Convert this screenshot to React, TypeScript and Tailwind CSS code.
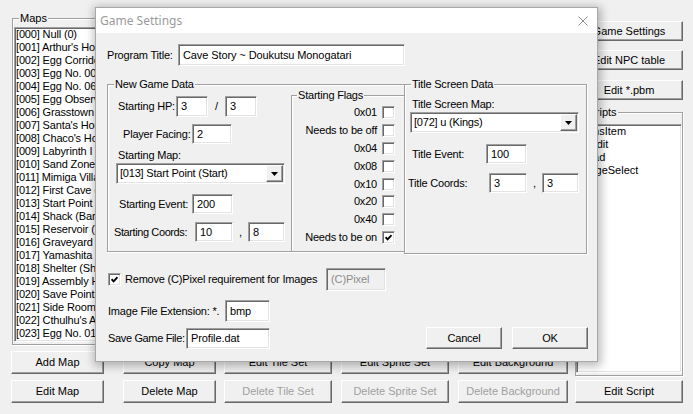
import React from "react";

const raised =
  "bg-[#f0f0f0] border border-t-white border-l-white border-b-[#696969] border-r-[#696969] shadow-[inset_-1px_-1px_0_#a0a0a0]";
const sunken =
  "border border-t-[#a0a0a0] border-l-[#a0a0a0] border-b-white border-r-white shadow-[inset_1px_1px_0_#696969,inset_-1px_-1px_0_#e3e3e3]";

function Btn({ label, className = "", disabled = false }: { label: string; className?: string; disabled?: boolean }) {
  return (
    <div
      className={`${raised} flex items-center justify-center whitespace-nowrap shrink-0 ${
        disabled ? "text-[#a0a0a0]" : "text-black"
      } ${className}`}
    >
      {label}
    </div>
  );
}

function Field({ value, className = "", disabled = false }: { value: string; className?: string; disabled?: boolean }) {
  return (
    <div
      className={`${sunken} ${
        disabled ? "bg-[#f0f0f0] text-[#8c8c8c]" : "bg-white"
      } flex items-center pl-[4px] whitespace-nowrap overflow-hidden shrink-0 tracking-[-0.1px] ${className}`}
    >
      {value}
    </div>
  );
}

function Combo({ value, className = "" }: { value: string; className?: string }) {
  return (
    <div className={`${sunken} bg-white flex items-stretch shrink-0 p-[1px] ${className}`}>
      <div className="flex-1 flex items-center pl-[2px] whitespace-nowrap overflow-hidden">{value}</div>
      <div className={`${raised} w-[17px] flex items-center justify-center`}>
        <svg width="7" height="4" viewBox="0 0 7 4">
          <path d="M0 0H7L3.5 4Z" fill="#000" />
        </svg>
      </div>
    </div>
  );
}

function Check({ checked = false }: { checked?: boolean }) {
  return (
    <div className={`${sunken} bg-white w-[13px] h-[13px] shrink-0 flex items-center justify-center`}>
      {checked && (
        <svg width="7" height="7" viewBox="0 0 7 7">
          <path d="M0.6 3.2 L2.6 5.3 L6.5 1.2" stroke="#000" strokeWidth="1.9" fill="none" />
        </svg>
      )}
    </div>
  );
}

function Group({
  label,
  className = "",
  labelClass = "left-[6px]",
  children,
}: {
  label: string;
  className?: string;
  labelClass?: string;
  children?: React.ReactNode;
}) {
  return (
    <div className={`relative border border-[#a0a0a0] shadow-[inset_1px_1px_0_#fff,1px_1px_0_#fff] ${className}`}>
      <span className={`absolute -top-[7px] ${labelClass} bg-[#f0f0f0] px-[1px] leading-[13px] whitespace-nowrap`}>
        {label}
      </span>
      {children}
    </div>
  );
}

const MAPS = [
  "[000] Null (0)",
  "[001] Arthur's House (Pens1)",
  "[002] Egg Corridor (Eggs)",
  "[003] Egg No. 00 (EggX)",
  "[004] Egg No. 06 (Egg6)",
  "[005] Egg Observation Room (EggR)",
  "[006] Grasstown (Weed)",
  "[007] Santa's House (Santa)",
  "[008] Chaco's House (Chako)",
  "[009] Labyrinth I (MazeI)",
  "[010] Sand Zone (Sand)",
  "[011] Mimiga Village (Mimi)",
  "[012] First Cave (Cave)",
  "[013] Start Point (Start)",
  "[014] Shack (Barr)",
  "[015] Reservoir (Pool)",
  "[016] Graveyard (Cemet)",
  "[017] Yamashita Farm (Plant)",
  "[018] Shelter (Shelt)",
  "[019] Assembly Hall (Comu)",
  "[020] Save Point (MiBox)",
  "[021] Side Room (EgEnd1)",
  "[022] Cthulhu's Abode (Cthu)",
  "[023] Egg No. 01 (Egg1)",
];

const SCRIPTS = ["ArmsItem", "Credit", "Head", "StageSelect"];

const FLAGS: [string, boolean][] = [
  ["0x01", false],
  ["Needs to be off", false],
  ["0x04", false],
  ["0x08", false],
  ["0x10", false],
  ["0x20", false],
  ["0x40", false],
  ["Needs to be on", true],
];

function Dialog() {
  return (
    <div className="absolute left-[95px] top-[7px] w-[503px] h-[355px] border border-[#a8a8a8] bg-[#f0f0f0] shadow-[1px_2px_9px_2px_rgba(0,0,0,0.28)] flex flex-col tracking-[-0.2px]">
      {/* title bar */}
      <div className="h-[25px] bg-white flex items-center justify-between pl-[4px] pr-[9px] shrink-0 tracking-normal">
        <span className="font-['Noto_Sans',sans-serif] text-[12px] leading-[16px] text-[#9b9b9b]">Game Settings</span>
        <svg width="10" height="10" viewBox="0 0 10 10">
          <path d="M0.5 0.5 L9.5 9.5 M9.5 0.5 L0.5 9.5" stroke="#8f8f8f" strokeWidth="1" />
        </svg>
      </div>

      {/* program title */}
      <div className="mt-[11px] pl-[11px] flex items-center">
        <span className="w-[70px] mr-[1px] shrink-0 whitespace-nowrap">Program Title:</span>
        <Field value="Cave Story ~ Doukutsu Monogatari" className="w-[227px] h-[22px]" />
      </div>

      {/* groups */}
      <div className="mt-[18px] pl-[11px] flex items-start">
        <Group label="New Game Data" className="w-[298px] h-[168px] flex">
          <div className="w-[183px] shrink-0 flex flex-col">
            <div className="mt-[11px] pl-[10px] flex items-center h-[21px]">
              <span className="w-[57px] mr-[1px] shrink-0 whitespace-nowrap">Starting HP:</span>
              <Field value="3" className="w-[32px] h-[21px]" />
              <span className="w-[17px] text-center shrink-0">/</span>
              <Field value="3" className="w-[32px] h-[21px]" />
            </div>
            <div className="mt-[7px] pl-[15px] flex items-center h-[20px]">
              <span className="w-[68px] mr-[1px] shrink-0 whitespace-nowrap">Player Facing:</span>
              <Field value="2" className="w-[40px] h-[20px]" />
            </div>
            <div className="mt-[5px] pl-[10px] h-[13px] whitespace-nowrap">Starting Map:</div>
            <div className="mt-[1px] pl-[8px]">
              <Combo value="[013] Start Point (Start)" className="w-[169px] h-[21px]" />
            </div>
            <div className="mt-[10px] pl-[11px] flex items-center h-[20px]">
              <span className="w-[72px] mr-[1px] shrink-0 whitespace-nowrap">Starting Event:</span>
              <Field value="200" className="w-[41px] h-[20px]" />
            </div>
            <div className="mt-[8px] pl-[6px] flex items-center h-[20px]">
              <span className="w-[80px] mr-[1px] shrink-0 whitespace-nowrap tracking-[-0.4px]">Starting Coords:</span>
              <Field value="10" className="w-[38px] h-[20px]" />
              <span className="w-[15px] text-center shrink-0">,</span>
              <Field value="8" className="w-[37px] h-[20px]" />
            </div>
          </div>
          <Group
            label="Starting Flags"
            labelClass="left-[5px]"
            className="w-[114px] mt-[10px] -mr-[1px] -mb-[1px] self-stretch flex flex-col pt-[8px]"
          >
            {FLAGS.map(([t, c]) => (
              <div key={t} className="h-[17.8px] flex items-center justify-end pr-[9px] gap-[5px] whitespace-nowrap">
                <span>{t}</span>
                <Check checked={c} />
              </div>
            ))}
          </Group>
        </Group>

        <Group label="Title Screen Data" className="-ml-[1px] w-[183px] h-[170px] flex flex-col">
          <div className="mt-[13px] pl-[7px] h-[13px] whitespace-nowrap">Title Screen Map:</div>
          <div className="mt-[1px] pl-[5px]">
            <Combo value="[072] u (Kings)" className="w-[169px] h-[21px]" />
          </div>
          <div className="mt-[11px] pl-[7px] flex items-center h-[20px]">
            <span className="w-[73px] mr-[1px] shrink-0 whitespace-nowrap">Title Event:</span>
            <Field value="100" className="w-[41px] h-[20px]" />
          </div>
          <div className="mt-[9px] pl-[3px] flex items-center h-[20px]">
            <span className="w-[80px] mr-[1px] shrink-0 whitespace-nowrap">Title Coords:</span>
            <Field value="3" className="w-[38px] h-[20px]" />
            <span className="w-[15px] text-center shrink-0">,</span>
            <Field value="3" className="w-[37px] h-[20px]" />
          </div>
        </Group>
      </div>

      {/* remove pixel */}
      <div className="mt-[14px] pl-[12px] flex items-center h-[23px]">
        <Check checked />
        <span className="ml-[4px] w-[200px] mr-[1px] shrink-0 whitespace-nowrap">Remove (C)Pixel requirement for Images</span>
        <Field value="(C)Pixel" disabled className="w-[60px] h-[23px]" />
      </div>

      <div className="mt-[9px] pl-[12px] flex items-center h-[22px]">
        <span className="w-[116px] mr-[1px] shrink-0 whitespace-nowrap">Image File Extension: *.</span>
        <Field value="bmp" className="w-[45px] h-[22px]" />
      </div>

      <div className="mt-[5px] pl-[12px] pr-[9px] flex items-start">
        <div className="mt-[1px] flex items-center h-[21px]">
          <span className="w-[77px] mr-[1px] shrink-0 whitespace-nowrap tracking-[-0.35px]">Save Game File:</span>
          <Field value="Profile.dat" className="w-[84px] h-[21px]" />
        </div>
        <div className="ml-auto flex">
          <Btn label="Cancel" className="w-[76px] h-[22px]" />
          <Btn label="OK" className="ml-[10px] w-[76px] h-[22px]" />
        </div>
      </div>
    </div>
  );
}

export default function App() {
  return (
    <div className="relative w-[693px] h-[414px] overflow-hidden bg-[#f0f0f0] text-black text-[11px] leading-[13px] font-['Liberation_Sans',Arial,sans-serif]">
      <div className="flex pl-[11px] gap-[7px]">
        {/* left column */}
        <div className="flex flex-col w-[557px] shrink-0">
          <Group label="Maps" className="ml-[1px] mt-[18px] w-[556px] h-[327px]">
            <div className={`${sunken} bg-white mt-[8px] mx-[1px] h-[315px] overflow-hidden tracking-[-0.15px]`}>
              {MAPS.map((m) => (
                <div key={m} className="h-[13px] whitespace-nowrap pl-[1px]">
                  {m}
                </div>
              ))}
            </div>
          </Group>
          <div className="flex mt-[6px] h-[23px]">
            <Btn label="Add Map" className="w-[93px]" />
            <Btn label="Copy Map" className="ml-[19px] w-[93px]" />
            <Btn label="Edit Tile Set" className="ml-[8px] w-[108px]" />
            <Btn label="Edit Sprite Set" className="ml-[9px] w-[108px]" />
            <Btn label="Edit Background" className="ml-[9px] w-[110px]" />
          </div>
          <div className="flex mt-[6px] h-[23px]">
            <Btn label="Edit Map" className="w-[93px]" />
            <Btn label="Delete Map" className="ml-[19px] w-[93px]" />
            <Btn label="Delete Tile Set" disabled className="ml-[8px] w-[108px]" />
            <Btn label="Delete Sprite Set" disabled className="ml-[9px] w-[108px]" />
            <Btn label="Delete Background" disabled className="ml-[9px] w-[110px]" />
          </div>
        </div>

        {/* right column */}
        <div className="flex flex-col w-[108px] shrink-0">
          <Btn label="Game Settings" className="mt-[21px] h-[20px]" />
          <Btn label="Edit NPC table" className="mt-[9px] h-[20px]" />
          <Btn label="Edit *.pbm" className="mt-[10px] h-[20px]" />
          <Group label="Scripts" className="mt-[12px] h-[264px]">
            <div className={`${sunken} bg-white mt-[11px] h-[249px] overflow-hidden`}>
              {SCRIPTS.map((s) => (
                <div key={s} className="h-[13px] whitespace-nowrap pl-[2px]">
                  {s}
                </div>
              ))}
            </div>
          </Group>
          <Btn label="Edit Script" className="mt-[4px] h-[23px]" />
        </div>
      </div>

      <Dialog />
    </div>
  );
}
